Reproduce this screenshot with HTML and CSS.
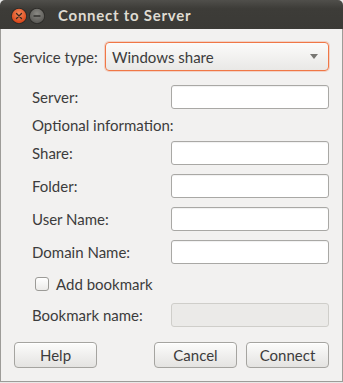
FILE: index.html
```html
<!DOCTYPE html>
<html lang="en">
<head>
    <meta charset="UTF-8">
    <meta name="viewport" content="width=device-width, initial-scale=1.0">
    <title>Connect to Server</title>
    <link rel="stylesheet" href="styles.css">
</head>
<body>
    <div class="window">
        <div class="titlebar">
            <svg class="wbtn" width="18" height="18" viewBox="0 0 18 18">
                <defs>
                    <radialGradient id="closeGrad" cx="50%" cy="35%" r="60%">
                        <stop offset="0" stop-color="#f58a5a"/>
                        <stop offset="1" stop-color="#d9471b"/>
                    </radialGradient>
                </defs>
                <circle cx="9" cy="9" r="8" fill="#2b2a27"/>
                <circle cx="9" cy="9" r="7.2" fill="url(#closeGrad)"/>
                <path d="M6.5 6.5 L11.5 11.5 M11.5 6.5 L6.5 11.5" stroke="#3a2a22" stroke-width="1.3" stroke-linecap="round"/>
            </svg>
            <svg class="wbtn" width="18" height="18" viewBox="0 0 18 18">
                <defs>
                    <radialGradient id="minGrad" cx="50%" cy="35%" r="60%">
                        <stop offset="0" stop-color="#8a8984"/>
                        <stop offset="1" stop-color="#5c5b57"/>
                    </radialGradient>
                </defs>
                <circle cx="9" cy="9" r="8" fill="#2b2a27"/>
                <circle cx="9" cy="9" r="7.2" fill="url(#minGrad)"/>
                <path d="M6 9 L12 9" stroke="#33322f" stroke-width="1.4" stroke-linecap="round"/>
            </svg>
            <span class="title">Connect to Server</span>
        </div>

        <div class="content">
            <div class="service-row">
                <span class="service-label">Service type:</span>
                <div class="combo">
                    <span>Windows share</span>
                    <span class="arrow"></span>
                </div>
            </div>

            <div class="form">
                <span class="label">Server:</span>
                <input class="entry" type="text">

                <span class="label wide">Optional information:</span>

                <span class="label">Share:</span>
                <input class="entry" type="text">

                <span class="label">Folder:</span>
                <input class="entry" type="text">

                <span class="label">User Name:</span>
                <input class="entry" type="text">

                <span class="label">Domain Name:</span>
                <input class="entry" type="text">

                <label class="check-row wide">
                    <span class="checkbox"></span>
                    <span>Add bookmark</span>
                </label>

                <span class="label">Bookmark name:</span>
                <input class="entry" type="text" disabled>
            </div>

            <div class="buttons">
                <button class="btn">Help</button>
                <span class="spacer"></span>
                <button class="btn">Cancel</button>
                <button class="btn">Connect</button>
            </div>
        </div>
    </div>
</body>
</html>
```

FILE: styles.css
```css
html {
    background-color: #e8e8e7;
}
body {
    margin: 0;
    padding: 0;
    font-family: Lato, "Noto Sans", sans-serif;
    font-size: 15px;
    color: #3c3c3c;
}
.window {
    width: 343px;
    height: 383px;
    box-sizing: border-box;
    display: flex;
    flex-direction: column;
    border-radius: 5px 5px 0 0;
    overflow: hidden;
}
.titlebar {
    height: 29px;
    flex: none;
    display: flex;
    align-items: center;
    padding-left: 10px;
    background: linear-gradient(#504f4b, #3d3c38 30%, #3b3a36);
}
.wbtn {
    display: block;
    margin-top: 3px;
}
.title {
    margin-left: 12px;
    margin-top: 1px;
    font-weight: bold;
    font-size: 15px;
    color: #dfdbd2;
    letter-spacing: 0.75px;
}
.content {
    flex: 1;
    background-color: #f2f1f0;
    border: 1px solid #9d9c98;
    border-top: none;
    padding: 13px 13px 0 12px;
    margin-bottom: 1px;
}
.service-row {
    display: flex;
    align-items: center;
    height: 29px;
}
.service-label {
    width: 92px;
    flex: none;
}
.combo {
    flex: 1;
    height: 29px;
    box-sizing: border-box;
    display: flex;
    align-items: center;
    justify-content: space-between;
    padding: 0 10px 0 6px;
    border: 1px solid #f07746;
    border-radius: 4px;
    background: linear-gradient(#fbfbfa, #e9e8e6);
    box-shadow: 0 0 0 1px rgba(240, 119, 70, 0.25);
}
.arrow {
    width: 0;
    height: 0;
    border-left: 4px solid transparent;
    border-right: 4px solid transparent;
    border-top: 5px solid #777672;
}
.form {
    margin-top: 14px;
    padding-left: 19px;
    display: grid;
    grid-template-columns: 1fr 158px;
    grid-template-rows: 24px 14px 24px 24px 24px 24px 21px 24px;
    row-gap: 9px;
    align-items: center;
}
.label {
    white-space: nowrap;
}
.wide {
    grid-column: 1 / 3;
}
.entry {
    height: 24px;
    box-sizing: border-box;
    margin: 0;
    border: 1px solid #a9a8a5;
    border-radius: 3px;
    background-color: white;
    box-shadow: inset 0 1px 1px rgba(0,0,0,0.06);
}
.entry:disabled {
    background-color: #ebeae8;
    border-color: #cfceca;
    box-shadow: none;
}
.check-row {
    display: flex;
    align-items: center;
    margin-left: 3px;
}
.checkbox {
    width: 14px;
    height: 14px;
    box-sizing: border-box;
    border: 1px solid #9c9b97;
    border-radius: 3px;
    background: linear-gradient(#ffffff, #ecebe9);
    margin-right: 7px;
}
.buttons {
    margin-top: 15px;
    display: flex;
    gap: 9px;
}
.spacer {
    flex: 1;
}
.btn {
    width: 83px;
    height: 26px;
    margin: 0;
    padding: 0;
    font-family: inherit;
    font-size: 15px;
    color: #3c3c3c;
    border: 1px solid #a5a4a0;
    border-radius: 4px;
    background: linear-gradient(#fcfcfb, #e4e3e1);
    box-shadow: inset 0 1px 0 #ffffff;
}
.btn:first-child {
    margin-left: 1px;
}
```
